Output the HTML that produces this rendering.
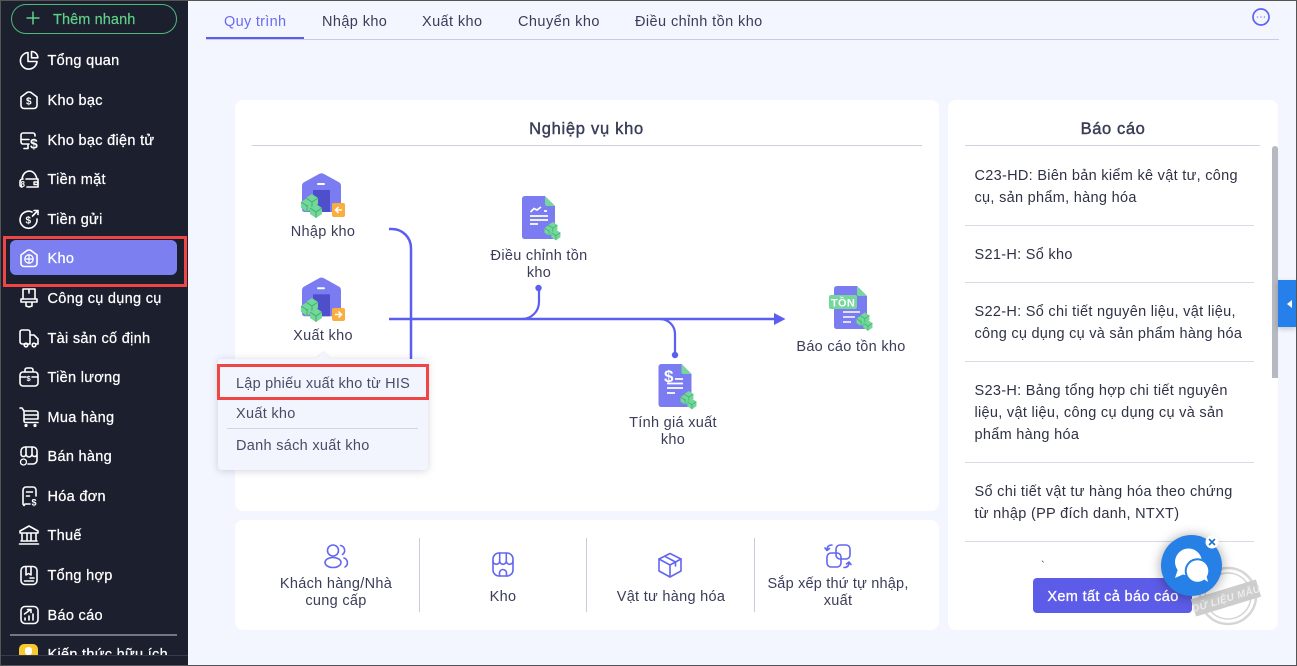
<!DOCTYPE html>
<html lang="vi"><head><meta charset="utf-8"><title>Kho</title>
<style>
html,body{margin:0;padding:0;width:1297px;height:666px;overflow:hidden;background:#f3f6ff}
body{position:relative;font-family:"Liberation Sans","DejaVu Sans",sans-serif;color:#3a3d58}
div,span,svg{position:absolute}
.t{white-space:nowrap;font-size:14.5px;line-height:20px;letter-spacing:.3px;margin-top:2px}
.c{transform:translateX(-50%)}
.s{left:47.5px;color:#fff;font-size:14.5px;letter-spacing:.3px;-webkit-text-stroke:.25px #fff;white-space:nowrap;line-height:20px;margin-top:1px}
.i{left:17px;width:24px;height:24px;fill:none;stroke:#fff;stroke-width:1.6;stroke-linecap:round;stroke-linejoin:round}
.i text{fill:#fff;stroke:none;font-family:"Liberation Sans";font-weight:700}
.card{background:#fff;border-radius:8px}
.h{height:1px;background:#d9dae6}
.v{width:1px;background:#c9cbe0;top:538px;height:74px}
.bi{fill:none;stroke:#6366f1;stroke-width:1.6;stroke-linecap:round;stroke-linejoin:round;width:28px;height:28px}
.r{left:974.5px;color:#2f3245}
</style></head><body>

<!-- main cards -->
<div class="card" style="left:235px;top:100px;width:704px;height:411px"></div>
<div class="card" style="left:235px;top:520px;width:704px;height:110px"></div>
<div class="card" style="left:948px;top:100px;width:330px;height:530px"></div>

<!-- tabs -->
<div class="t" style="left:224px;top:10px;color:#6a6cf0">Quy trình</div>
<div class="t" style="left:322px;top:10px;letter-spacing:.4px">Nhập kho</div>
<div class="t" style="left:422px;top:10px;letter-spacing:.4px">Xuất kho</div>
<div class="t" style="left:518px;top:10px;letter-spacing:.45px">Chuyển kho</div>
<div class="t" style="left:635px;top:10px;letter-spacing:.42px">Điều chỉnh tồn kho</div>
<div style="left:206px;top:39px;width:1073px;height:1px;background:#c9cbe4"></div>
<div style="left:206px;top:37px;width:98px;height:2px;background:#5b5ff0"></div>
<svg style="left:1251px;top:7px" width="20" height="20"><circle cx="10" cy="10" r="8" fill="none" stroke="#5f62f2" stroke-width="1.700"/><circle cx="6.500" cy="10" r=".8" fill="#8f91f0"/><circle cx="10" cy="10" r=".8" fill="#8f91f0"/><circle cx="13.500" cy="10" r=".8" fill="#8f91f0"/></svg>

<!-- diagram -->
<div class="t c" style="left:586.5px;top:117px;font-size:16.5px;letter-spacing:.72px;-webkit-text-stroke:.4px #3a3d58">Nghiệp vụ kho</div>
<div class="h" style="left:252px;top:145px;width:670px;background:#cfd0dc"></div>

<svg style="left:0;top:0" width="1297" height="666">
<defs>
<g id="house"><path d="M302 186 Q302 183.500 304 182.300 L319 174 Q321.500 172.500 324 174 L339 182.300 Q341 183.500 341 186 V209 Q341 212 338 212 H305 Q302 212 302 209Z" fill="#7b7cf2"/><rect x="313" y="190" width="17" height="22" fill="#4f4fcb"/><rect x="317" y="183" width="8" height="2" rx="1" fill="#fff"/></g>
<g id="cube"><path d="M0 5 L6 1 L12 5 L12 11 L6 15 L0 11Z" fill="#72d89a"/><path d="M0 5 L6 9 L12 5 M6 9V15" fill="none" stroke="#45ab70" stroke-width="1"/></g>
<g id="cubes"><use href="#cube" x="0" y="3"/><use href="#cube" x="5" y="-1" /><use href="#cube" x="9" y="9"/></g>
<g id="doc"><path d="M3 0 H23 L33 10 V40 Q33 43 30 43 H3 Q0 43 0 40 V3 Q0 0 3 0Z" fill="#7b7cf2"/><path d="M23 0 L33 10 H25 Q23 10 23 8Z" fill="#75d79b"/></g>
</defs>
<g fill="none" stroke="#5b5ff0">
<path d="M389 229 H392 A19 19 0 0 1 411 248 V362" stroke-width="2.500"/>
<path d="M389 319 H776" stroke-width="2.400"/>
<path d="M522 319 A17 17 0 0 0 539 302 V288" stroke-width="2.200"/>
<path d="M660 319 A15 15 0 0 1 675 334 V355" stroke-width="2.200"/>
</g>
<path d="M774 313 L785.500 319 L774 325Z" fill="#5b5ff0"/>
<circle cx="538.500" cy="288" r="3.200" fill="#5b5ff0"/>
<circle cx="675" cy="355" r="3.200" fill="#5b5ff0"/>

<use href="#house"/>
<use href="#cubes" x="301" y="194"/>
<rect x="332" y="203" width="13" height="14" rx="2" fill="#f9ae3d"/>
<path d="M342 210 H335.500 M338.500 207 L335.500 210 L338.500 213" fill="none" stroke="#fff" stroke-width="1.500"/>

<use href="#house" y="104.300"/>
<use href="#cubes" x="301" y="298"/>
<rect x="332" y="308" width="13" height="13" rx="2" fill="#f9ae3d"/>
<path d="M335 314.500 H341.500 M338.500 311.500 L341.500 314.500 L338.500 317.500" fill="none" stroke="#fff" stroke-width="1.500"/>

<use href="#doc" x="522" y="196"/>
<g stroke="#fff" fill="none" stroke-width="1.700"><path d="M530.500 212 L534 208.500 L537 210 L541 207 M544 211 H547 M530 216 H548 M530 220 H548 M530 224 H538"/></g>
<use href="#cubes" transform="translate(544.500 222) scale(.76)"/>

<use href="#doc" x="658.500" y="364"/>
<g stroke="#fff" fill="none" stroke-width="1.700"><path d="M675 379 H683 M667 383.500 H683 M667 388 H683 M667 393 H675"/></g>
<text x="664" y="382" font-size="17" font-weight="700" fill="#fff" font-family="Liberation Sans">$</text>
<use href="#cubes" transform="translate(680.500 391) scale(.76)"/>

<use href="#doc" x="834" y="286"/>
<rect x="829" y="295" width="28" height="14" rx="2" fill="#75d79b"/>
<text x="843" y="306.500" text-anchor="middle" font-size="11" font-weight="700" fill="#fff" font-family="Liberation Sans" letter-spacing=".3">TỒN</text>
<g stroke="#fff" fill="none" stroke-width="1.500"><path d="M843 312 H860 M843 317 H855 M843 322 H851"/></g>
<use href="#cubes" transform="translate(856.500 312.500) scale(.76)"/>
</svg>

<div class="t c" style="left:323px;top:220px">Nhập kho</div>
<div class="t c" style="left:323px;top:324px">Xuất kho</div>
<div class="t c" style="left:539px;top:244px">Điều chỉnh tồn</div>
<div class="t c" style="left:539px;top:261px">kho</div>
<div class="t c" style="left:851px;top:335px">Báo cáo tồn kho</div>
<div class="t c" style="left:673px;top:411px">Tính giá xuất</div>
<div class="t c" style="left:673px;top:428px">kho</div>

<!-- popup -->
<div style="left:218px;top:359px;width:210px;height:111px;background:#f3f5fe;border-radius:4px;box-shadow:0 1px 8px rgba(60,60,90,.22)"></div>
<div style="left:319px;top:354px;width:9px;height:9px;background:#f3f5fe;transform:rotate(45deg);box-shadow:-1px -1px 2px rgba(60,60,90,.08)"></div>
<div style="left:218px;top:359px;width:210px;height:8px;background:#f3f5fe;border-radius:4px 4px 0 0"></div>
<div class="t" style="left:236px;top:372px;color:#494c66;letter-spacing:.22px">Lập phiếu xuất kho từ HIS</div>
<div class="t" style="left:236px;top:402px;color:#494c66">Xuất kho</div>
<div class="h" style="left:227px;top:428px;width:191px;background:#d3d4e2"></div>
<div class="t" style="left:236px;top:434px;color:#494c66">Danh sách xuất kho</div>
<div style="left:217px;top:364px;width:206px;height:30px;border:3px solid #f04545"></div>

<!-- bottom shortcuts -->
<div class="v" style="left:419px"></div><div class="v" style="left:586px"></div><div class="v" style="left:754px"></div>
<svg class="bi" style="left:322px;top:542px" viewBox="0 0 28 28"><circle cx="11" cy="8.500" r="5.500"/><ellipse cx="11" cy="20.500" rx="8" ry="5"/><path d="M18.500 3.500a5 5 0 0 1 2 9M22 16a5 5 0 0 1 1 9"/></svg>
<svg class="bi" style="left:489px;top:550px" viewBox="0 0 28 28"><rect x="4" y="3" width="20" height="23" rx="6"/><path d="M4 11a3.300 3.300 0 0 0 6.700 0 3.300 3.300 0 0 0 6.600 0 3.300 3.300 0 0 0 6.700 0M10.700 3v8M17.300 3v8M10.500 26v-3a3.500 3.500 0 0 1 7 0v3"/></svg>
<svg class="bi" style="left:656px;top:551px" viewBox="0 0 28 28"><path d="M14 2.500 L25 8 V20 L14 26 L3 20 V8Z"/><path d="M3 8 L14 14 L25 8 M14 14 V26 M8.500 5.200 L19.500 11 V15"/></svg>
<svg class="bi" style="left:824px;top:542px" viewBox="0 0 28 28"><rect x="12" y="3" width="14" height="14" rx="4"/><rect x="3" y="11" width="14" height="14" rx="4"/><path d="M8 3 Q3 3 3 8 M1 6 L3 8.500 L5.500 6.500 M20 25.500 Q25 25.500 25 20.500 M27 22.500 L25 20 L22.500 22"/></svg>
<div class="t c" style="left:336px;top:572px">Khách hàng/Nhà</div>
<div class="t c" style="left:336px;top:589px">cung cấp</div>
<div class="t c" style="left:503px;top:585px">Kho</div>
<div class="t c" style="left:671px;top:585px">Vật tư hàng hóa</div>
<div class="t c" style="left:838px;top:572px;letter-spacing:.2px">Sắp xếp thứ tự nhập,</div>
<div class="t c" style="left:838px;top:589px">xuất</div>

<!-- reports -->
<div class="t c" style="left:1113px;top:117px;font-size:16.5px;letter-spacing:.6px;-webkit-text-stroke:.45px #3a3d58">Báo cáo</div>
<div class="h" style="left:965px;top:145px;width:295px;background:#d0d1de"></div>
<div class="t r" style="top:164px">C23-HD: Biên bản kiểm kê vật tư, công</div>
<div class="t r" style="top:186px">cụ, sản phẩm, hàng hóa</div>
<div class="h" style="left:965px;top:225px;width:289px"></div>
<div class="t r" style="top:243px">S21-H: Sổ kho</div>
<div class="h" style="left:965px;top:282px;width:289px"></div>
<div class="t r" style="top:300px">S22-H: Sổ chi tiết nguyên liệu, vật liệu,</div>
<div class="t r" style="top:322px;letter-spacing:.27px">công cụ dụng cụ và sản phẩm hàng hóa</div>
<div class="h" style="left:965px;top:361px;width:289px"></div>
<div class="t r" style="top:379px">S23-H: Bảng tổng hợp chi tiết nguyên</div>
<div class="t r" style="top:401px">liệu, vật liệu, công cụ dụng cụ và sản</div>
<div class="t r" style="top:423px">phẩm hàng hóa</div>
<div class="h" style="left:965px;top:462px;width:289px"></div>
<div class="t r" style="top:480px">Sổ chi tiết vật tư hàng hóa theo chứng</div>
<div class="t r" style="top:502px">từ nhập (PP đích danh, NTXT)</div>
<div class="h" style="left:965px;top:541px;width:289px"></div>
<div class="t" style="left:1041px;top:554px;font-size:11px;color:#333">`</div>
<div style="left:1272px;top:146px;width:6px;height:232px;background:#b6b9c1;border-radius:3px 3px 0 0"></div>

<div style="left:1033px;top:578px;width:159px;height:35px;background:#5c5ce8;border-radius:4px"></div>
<div class="t c" style="left:1113px;top:585px;color:#fff;font-size:14.5px;letter-spacing:.35px;-webkit-text-stroke:.3px #fff">Xem tất cả báo cáo</div>

<!-- blue side tab -->
<div style="left:1278px;top:280px;width:18px;height:47px;background:#2680eb;box-shadow:0 2px 5px rgba(0,0,0,.2)"></div>
<svg style="left:1285px;top:298px" width="10" height="12"><path d="M7 2 L2 6 L7 10Z" fill="#fff"/></svg>

<!-- stamp + chat -->
<svg style="left:1190px;top:560px" width="80" height="72">
<g fill="none" stroke="#d6d6d6"><circle cx="38" cy="36" r="28" stroke-width="2.500"/><circle cx="38" cy="36" r="23" stroke-width="1.500"/></g>
<g transform="rotate(-17 36 38)"><rect x="2" y="29" width="68" height="18" fill="#cdcdcd"/><text x="36" y="42" text-anchor="middle" font-size="10" font-weight="700" font-style="italic" fill="#ececec" font-family="Liberation Sans" letter-spacing=".4">DỮ LIỆU MẪU</text></g>
</svg>
<div style="left:1161px;top:535px;width:61px;height:61px;border-radius:50%;background:#2680e6;box-shadow:0 1px 12px rgba(0,0,0,.38)"></div>
<svg style="left:1161px;top:535px" width="61" height="61">
<circle cx="27.500" cy="27" r="13.500" fill="#fff"/>
<path d="M17 34 L14 43 L23 39Z" fill="#fff"/>
<circle cx="36.500" cy="36" r="12.800" fill="#2680e6"/>
<circle cx="36.500" cy="36" r="10.800" fill="#fff"/>
<path d="M41 43 L47 47 L45 39Z" fill="#fff"/>
</svg>
<svg style="left:1205px;top:535px" width="14" height="14"><circle cx="7" cy="7" r="6.500" fill="#fff"/><path d="M4.500 4.500 L9.500 9.500 M9.500 4.500 L4.500 9.500" stroke="#1f6fc9" stroke-width="1.600" stroke-linecap="round"/></svg>

<!-- sidebar -->
<div style="left:0;top:0;width:188px;height:666px;background:#1c1f2e"></div>
<div style="left:11px;top:4px;width:164px;height:28px;border:1px solid #4fb87c;border-radius:15px"></div>
<svg style="left:25px;top:10px" width="16" height="16"><path d="M8 1.500 V14.500 M1.500 8 H14.500" stroke="#5fd08a" stroke-width="1.500"/></svg>
<div class="t" style="left:53px;top:8px;color:#5fd08a;font-size:14.5px;letter-spacing:.1px;-webkit-text-stroke:.2px #5fd08a">Thêm nhanh</div>

<div style="left:10px;top:240px;width:167px;height:35px;background:#7b7ff0;border-radius:6px"></div>
<div style="left:3px;top:236px;width:178px;height:45px;border:3px solid #f04545"></div>

<svg class="i" style="top:48px" viewBox="0 0 24 24"><path d="M11 4.500a8.300 8.300 0 1 0 9 9h-9z"/><path d="M14.500 3.500a6.300 6.300 0 0 1 6.300 6.300h-6.300z"/></svg>
<div class="s" style="top:50px">Tổng quan</div>
<svg class="i" style="top:88px" viewBox="0 0 24 24"><path d="M4 9 L10 4.500 Q12 3.500 14 4.500 L20 9 V17.500 a3 3 0 0 1-3 3 H7 A3 3 0 0 1 4 17.500Z"/><text x="9" y="16.500" font-size="10">$</text></svg>
<div class="s" style="top:90px">Kho bạc</div>
<svg class="i" style="top:128px" viewBox="0 0 24 24"><path d="M12 16H6a2 2 0 0 1-2-2V7a2 2 0 0 1 2-2h10a2 2 0 0 1 2 2v1M4 11.500h8M7 20.500h4v-4"/><text x="13" y="20.500" font-size="14">$</text></svg>
<div class="s" style="top:130px">Kho bạc điện tử</div>
<svg class="i" style="top:167px" viewBox="0 0 24 24"><path d="M5 12 Q6 5 12 4 Q18 4 20 12M9 12h12v8H10M3 15v3a2 2 0 0 0 2 2M3 15q0-3 3-3"/><path d="M17 15h4v2.500h-4z" stroke-width="1.400"/><text x="3.500" y="20" font-size="8">8</text></svg>
<div class="s" style="top:169px">Tiền mặt</div>
<svg class="i" style="top:207px" viewBox="0 0 24 24"><path d="M15 5a8.500 8.500 0 1 0 5 7"/><text x="8.500" y="16.500" font-size="10">$</text><path d="M15.500 9 L21 3.500 M17 3.500h4v4"/></svg>
<div class="s" style="top:209px">Tiền gửi</div>
<svg class="i" style="top:246px" viewBox="0 0 24 24"><path d="M4 9 L10 4.500 Q12 3.500 14 4.500 L20 9 V17.500 a3 3 0 0 1-3 3 H7 A3 3 0 0 1 4 17.500Z"/><circle cx="12" cy="13" r="4.200" stroke-width="1.300"/><path d="M12 9v8M8 13h8" stroke-width="1.200"/></svg>
<div class="s" style="top:248px">Kho</div>
<svg class="i" style="top:286px" viewBox="0 0 24 24"><path d="M6 3h12v10H6zM12 3v4M4 13h16v3H4zM9 16v4l3 1 3-1v-4"/></svg>
<div class="s" style="top:288px">Công cụ dụng cụ</div>
<svg class="i" style="top:326px" viewBox="0 0 24 24"><path d="M13 18H5.500A2.500 2.500 0 0 1 3 15.500V6a2 2 0 0 1 2-2h6a2 2 0 0 1 2 2v12zM13 9h4l4 4v5h-2"/><circle cx="9" cy="19" r="1.800"/><circle cx="17" cy="19" r="1.800"/></svg>
<div class="s" style="top:328px">Tài sản cố định</div>
<svg class="i" style="top:365px" viewBox="0 0 24 24"><path d="M8 7V5a2 2 0 0 1 2-2h4a2 2 0 0 1 2 2v2M3 10a3 3 0 0 1 3-3h12a3 3 0 0 1 3 3v8a3 3 0 0 1-3 3H6a3 3 0 0 1-3-3zM3 12h6M15 12h6"/><text x="9.500" y="16" font-size="7.500">$</text></svg>
<div class="s" style="top:367px">Tiền lương</div>
<svg class="i" style="top:405px" viewBox="0 0 24 24"><path d="M3 3h2l2 3v10a1.500 1.500 0 0 0 1.500 1.500H21M7 6h12a2 2 0 0 1 2 2v6H7M7 10h14"/><circle cx="9" cy="20.500" r=".8" fill="#fff"/><circle cx="18" cy="20.500" r=".8" fill="#fff"/></svg>
<div class="s" style="top:407px">Mua hàng</div>
<svg class="i" style="top:444px" viewBox="0 0 24 24"><path d="M4 9V7a4 4 0 0 1 4-4h8a4 4 0 0 1 4 4v9a4 4 0 0 1-4 4h-5M9 3v7M15 3v7M4 10a2.500 2.500 0 0 0 5 0 3 3 0 0 0 6 0 2.500 2.500 0 0 0 5 0"/><circle cx="6.500" cy="18" r="3" stroke-width="1.300"/></svg>
<div class="s" style="top:446px">Bán hàng</div>
<svg class="i" style="top:484px" viewBox="0 0 24 24"><path d="M13 20H8l-1 1.500L6 20V6a3 3 0 0 1 3-3h7a3 3 0 0 1 3 3v6M9.500 8h6M9.500 12h3"/><text x="14.500" y="21.500" font-size="9">$</text></svg>
<div class="s" style="top:486px">Hóa đơn</div>
<svg class="i" style="top:523px" viewBox="0 0 24 24"><path d="M12 3 L21 8 V10 H3 V8Z M5 10V18M10 10V18M14 10V18M19 10V18M4 18H20M2.500 21H21.500"/></svg>
<div class="s" style="top:525px">Thuế</div>
<svg class="i" style="top:563px" viewBox="0 0 24 24"><rect x="4" y="3.500" width="16" height="18" rx="4"/><path d="M9 4v8l2.500-1.500L14 12V4M13 15h4M7.500 18h9"/></svg>
<div class="s" style="top:565px">Tổng hợp</div>
<svg class="i" style="top:603px" viewBox="0 0 24 24"><rect x="4" y="3.500" width="17" height="17" rx="4"/><path d="M8 17v-2M12 17v-4M16 17v-6M7.500 11 L13 7 M10.500 6.500 H14 V9.500"/></svg>
<div class="s" style="top:605px">Báo cáo</div>
<div style="left:10px;top:634px;width:167px;height:2px;background:#75777f"></div>
<div style="left:19px;top:644px;width:19px;height:11px;background:#f7c92f;border-radius:5px 5px 0 0;overflow:hidden"><div style="left:6px;top:3px;width:7px;height:8px;background:#fff;border-radius:3px"></div></div>
<div style="left:47.5px;top:640px;width:130px;height:15px;overflow:hidden"><div class="s" style="left:0;top:4px">Kiến thức hữu ích</div></div>
<div style="left:0;top:655px;width:188px;height:1px;background:#383b4c"></div>

<!-- window frame -->
<div style="left:0;top:0;width:1297px;height:1px;background:#555"></div>
<div style="left:0;top:665px;width:1297px;height:1px;background:#555"></div>
<div style="left:0;top:0;width:1px;height:666px;background:#555"></div>
<div style="left:1296px;top:0;width:1px;height:666px;background:#555"></div>
</body></html>
